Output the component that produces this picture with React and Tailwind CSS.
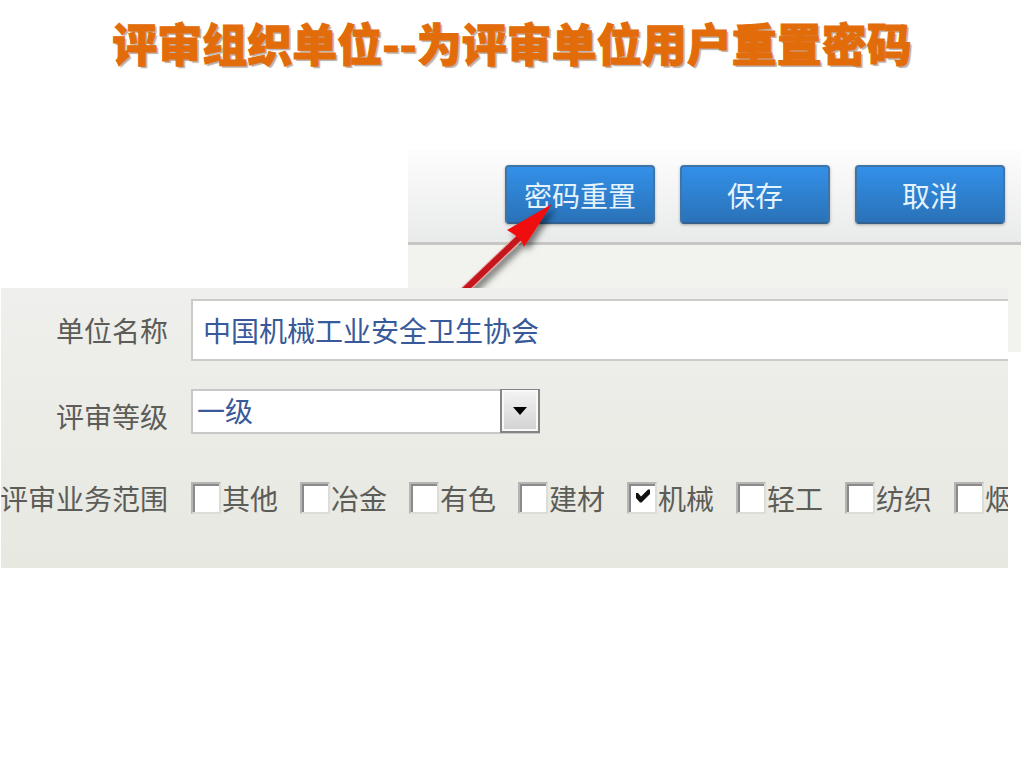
import React, { useState } from "react";

const SCOPES = ["其他", "冶金", "有色", "建材", "机械", "轻工", "纺织", "烟"];

const ToolbarButton = ({ children }) => (
  <button
    type="button"
    className="h-[59px] w-[150px] shrink-0 rounded-[4px] border-2 border-[#3f74a8] border-b-[#35618f] bg-gradient-to-b from-[#3390e8] to-[#2a72b8] text-[28px] leading-none text-[#e4f3fd] shadow-[0_1px_3px_rgba(0,0,0,0.3)]"
  >
    {children}
  </button>
);

const ScopeCheckbox = ({ name, checked, onChange }) => (
  <label className="flex shrink-0 items-center gap-px">
    <span className="relative block h-8 w-[30px]">
      <input
        type="checkbox"
        checked={checked}
        onChange={onChange}
        className="block h-8 w-[30px] appearance-none border-2 border-[#dcdcd8] border-t-[#b5b5b3] border-l-[#b5b5b3] bg-white shadow-[inset_2px_2px_0_#8a8a8c]"
      />
      {checked && (
        <svg viewBox="0 0 16 14" className="pointer-events-none absolute top-[7px] left-2 h-3.5 w-4">
          <path d="M1 4 L3 4 L6 7.5 L13 0.5 H15 V5 L6.5 13.5 H5 L1 9 Z" fill="#111" />
        </svg>
      )}
    </span>
    <span className="leading-9">{name}</span>
  </label>
);

const App = () => {
  const [unitName, setUnitName] = useState("中国机械工业安全卫生协会");
  const [level, setLevel] = useState("一级");
  const [scopes, setScopes] = useState(["机械"]);

  const toggleScope = (name) => {
    setScopes((prev) =>
      prev.includes(name) ? prev.filter((s) => s !== name) : [...prev, name]
    );
  };

  return (
    <div className="min-h-screen overflow-x-hidden bg-white font-['Noto_Sans_CJK_SC',sans-serif]">
      <h1 className="pt-4 pb-20 text-center text-[45px] leading-[54px] font-black text-[#e36c0a] [-webkit-text-stroke:1px_#e36c0a] [text-shadow:2px_2px_1px_#b8b0aa]">
        评审组织单位--为评审单位用户重置密码
      </h1>

      {/* Toolbar */}
      <section className="relative mr-[3px] ml-[408px] bg-[#f2f3ee] pb-[107px]">
        <div className="flex justify-end gap-[25px] border-b-[3px] border-[#c6c7c4] bg-gradient-to-b from-[#fcfdfc] to-[#e9ebea] pt-[15px] pr-4 pb-[18px]">
          <ToolbarButton>密码重置</ToolbarButton>
          <ToolbarButton>保存</ToolbarButton>
          <ToolbarButton>取消</ToolbarButton>
        </div>
        <svg
          viewBox="0 0 120 110"
          className="pointer-events-none absolute top-[45px] left-[40px] h-[110px] w-[120px]"
        >
          <defs>
            <filter id="arrow-shadow" x="-20%" y="-20%" width="150%" height="150%">
              <feDropShadow dx="4" dy="4" stdDeviation="3" floodColor="#000" floodOpacity="0.5" />
            </filter>
          </defs>
          <g filter="url(#arrow-shadow)">
            <path d="M72 42 L2 109" stroke="#e9a09a" strokeWidth="8" />
            <path d="M72 42 L2 109" stroke="#c4151b" strokeWidth="6" />
            <path d="M104 9 L59 35 L67 40 L74 47 L76 52 Z" fill="#f00b08" />
          </g>
        </svg>
      </section>

      {/* Unit form, covers the lower edge of the toolbar */}
      <form className="relative mr-4 -mt-16 ml-px grid grid-cols-[167px_minmax(0,1fr)] gap-x-[23px] overflow-hidden bg-gradient-to-b from-[#efefed] via-[#ebece6] to-[#e7e8e0] pt-[11px] pb-[54px] text-[28px] text-[#5c5c58]">
        <label htmlFor="unit-name" className="self-center text-right leading-9 whitespace-nowrap">
          单位名称
        </label>
        <input
          id="unit-name"
          type="text"
          value={unitName}
          onChange={(e) => setUnitName(e.target.value)}
          className="h-[62px] w-full border-2 border-r-0 border-[#cbccca] bg-white px-2.5 text-[#38599a] outline-none"
        />

        <label htmlFor="unit-level" className="mt-7 self-end text-right leading-9 whitespace-nowrap">
          评审等级
        </label>
        <div className="relative mt-7 h-[45px] w-[349px]">
          <select
            id="unit-level"
            value={level}
            onChange={(e) => setLevel(e.target.value)}
            className="block h-full w-full appearance-none border-2 border-[#c8c9c7] bg-white px-1 pb-1 leading-9 text-[#38599a] outline-none"
          >
            <option>一级</option>
            <option>二级</option>
            <option>三级</option>
          </select>
          <span className="pointer-events-none absolute top-0 right-0 flex h-11 w-10 items-center justify-center border-2 border-t border-[#858585] bg-gradient-to-b from-[#f4f4f4] to-[#d2d2d2] shadow-[inset_0_0_0_2px_#f8f8f8]">
            <svg viewBox="0 0 14 8" className="h-2 w-3.5">
              <path d="M0 0 H14 L7 8 Z" fill="#000" />
            </svg>
          </span>
        </div>

        <div id="scope-label" className="mt-12 flex items-center justify-end leading-8 whitespace-nowrap">
          评审业务范围
        </div>
        <div role="group" aria-labelledby="scope-label" className="mt-12 flex h-8 items-center gap-[22px] whitespace-nowrap">
          {SCOPES.map((name) => (
            <ScopeCheckbox
              key={name}
              name={name}
              checked={scopes.includes(name)}
              onChange={() => toggleScope(name)}
            />
          ))}
        </div>
      </form>
    </div>
  );
};

export default App;
